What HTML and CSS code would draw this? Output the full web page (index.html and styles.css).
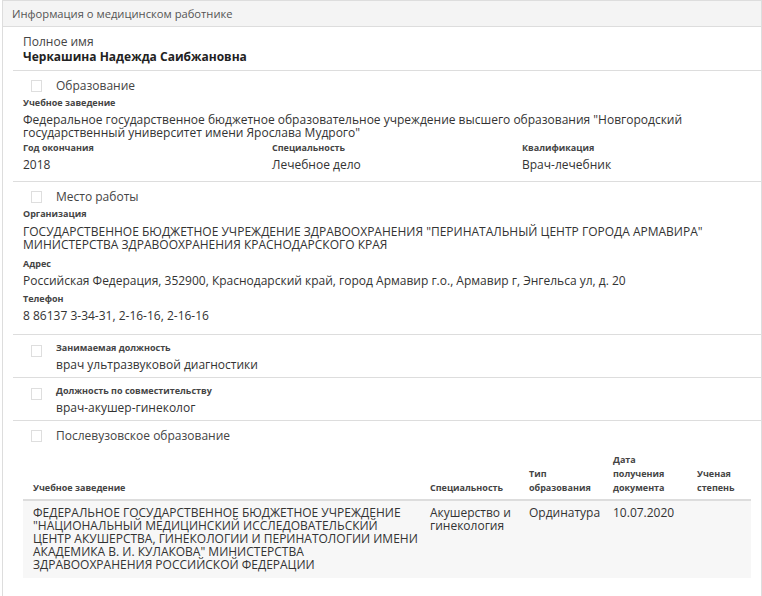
FILE: index.html
```html
<!DOCTYPE html>
<html lang="ru">

<head>
    <meta charset="UTF-8">
    <meta name="viewport" content="width=device-width, initial-scale=1.0">
    <title>Информация о медицинском работнике</title>
    <link rel="stylesheet" href="styles.css">
</head>

<body>

    <article class="panel">
        <header class="panel-heading">Информация о медицинском работнике</header>

        <div class="panel-body">

            <section class="block name-block">
                <p class="name-label">Полное имя</p>
                <p class="name-value">Черкашина Надежда Саибжановна</p>
            </section>

            <section class="block edu-block">
                <div class="check-row">
                    <span class="check"></span>
                    <span>Образование</span>
                </div>
                <div class="field">
                    <p class="label">Учебное заведение</p>
                    <p class="value">Федеральное государственное бюджетное образовательное учреждение высшего образования "Новгородский государственный университет имени Ярослава Мудрого"</p>
                </div>
                <div class="cols">
                    <div>
                        <p class="label">Год окончания</p>
                        <p class="value">2018</p>
                    </div>
                    <div>
                        <p class="label">Специальность</p>
                        <p class="value">Лечебное дело</p>
                    </div>
                    <div>
                        <p class="label">Квалификация</p>
                        <p class="value">Врач-лечебник</p>
                    </div>
                </div>
            </section>

            <section class="block work-block">
                <div class="check-row">
                    <span class="check"></span>
                    <span>Место работы</span>
                </div>
                <div class="field org">
                    <p class="label">Организация</p>
                    <p class="value">ГОСУДАРСТВЕННОЕ БЮДЖЕТНОЕ УЧРЕЖДЕНИЕ ЗДРАВООХРАНЕНИЯ "ПЕРИНАТАЛЬНЫЙ ЦЕНТР ГОРОДА АРМАВИРА" МИНИСТЕРСТВА ЗДРАВООХРАНЕНИЯ КРАСНОДАРСКОГО КРАЯ</p>
                </div>
                <div class="field spaced">
                    <p class="label">Адрес</p>
                    <p class="value">Российская Федерация, 352900, Краснодарский край, город Армавир г.о., Армавир г, Энгельса ул, д. 20</p>
                </div>
                <div class="field spaced">
                    <p class="label">Телефон</p>
                    <p class="value">8 86137 3-34-31, 2-16-16, 2-16-16</p>
                </div>
            </section>

            <section class="block post-block">
                <span class="check"></span>
                <div>
                    <p class="label">Занимаемая должность</p>
                    <p class="value">врач ультразвуковой диагностики</p>
                </div>
            </section>

            <section class="block post-block">
                <span class="check"></span>
                <div>
                    <p class="label">Должность по совместительству</p>
                    <p class="value">врач-акушер-гинеколог</p>
                </div>
            </section>

            <section class="block last-block">
                <div class="check-row">
                    <span class="check"></span>
                    <span>Послевузовское образование</span>
                </div>

                <table class="grid">
                    <thead>
                        <tr>
                            <th class="c1">Учебное заведение</th>
                            <th class="c2">Специальность</th>
                            <th class="c3">Тип образования</th>
                            <th class="c4">Дата получения документа</th>
                            <th class="c5">Ученая степень</th>
                        </tr>
                    </thead>
                    <tbody>
                        <tr>
                            <td>ФЕДЕРАЛЬНОЕ ГОСУДАРСТВЕННОЕ БЮДЖЕТНОЕ УЧРЕЖДЕНИЕ "НАЦИОНАЛЬНЫЙ МЕДИЦИНСКИЙ ИССЛЕДОВАТЕЛЬСКИЙ ЦЕНТР АКУШЕРСТВА, ГИНЕКОЛОГИИ И ПЕРИНАТОЛОГИИ ИМЕНИ АКАДЕМИКА В. И. КУЛАКОВА" МИНИСТЕРСТВА ЗДРАВООХРАНЕНИЯ РОССИЙСКОЙ ФЕДЕРАЦИИ</td>
                            <td>Акушерство и гинекология</td>
                            <td>Ординатура</td>
                            <td>10.07.2020</td>
                            <td></td>
                        </tr>
                    </tbody>
                </table>
            </section>

        </div>
    </article>

</body>

</html>
```

FILE: styles.css
```css
body {
    font-family: "Open Sans", "Liberation Sans", sans-serif;
    margin: 0;
    color: #333;
    background-color: white;
}

p {
    margin: 0;
}

.panel {
    margin-left: 2px;
    width: 758px;
    border: 1px solid #ddd;
    border-bottom: none;
    min-height: 595px;
}

.panel-heading {
    height: 25px;
    line-height: 25px;
    padding-left: 9px;
    font-size: 11.2px;
    color: #555;
    background-color: #f4f4f4;
    border-bottom: 1px solid #ddd;
}

.panel-body {
    padding-left: 10px;
}

.block {
    padding: 6px 0 6px 10px;
    border-bottom: 1px solid #ddd;
}

.name-block {
    padding-top: 7px;
    padding-bottom: 5px;
}

.name-label {
    font-size: 12px;
    line-height: 15px;
    color: #444;
}

.name-value {
    font-size: 12px;
    line-height: 16px;
    font-weight: bold;
    color: #222;
}

.check {
    display: inline-block;
    width: 9px;
    height: 10px;
    border: 1px solid #dedede;
    background-color: white;
}

.check-row {
    display: flex;
    align-items: center;
    height: 17px;
    font-size: 12px;
    color: #444;
}

.check-row .check {
    margin: 0 14px 0 8px;
}

.label {
    font-size: 9px;
    line-height: 14px;
    font-weight: bold;
    color: #444;
}

.value {
    margin-top: 3px;
    font-size: 12px;
    line-height: 13px;
    color: #333;
}

.field {
    margin-top: 2px;
}

.field.org .value {
    margin-top: 4px;
}

.field.spaced {
    margin-top: 6px;
}

.field.spaced + .field.spaced {
    margin-top: 5px;
}

.cols {
    display: grid;
    grid-template-columns: 249px 250px 1fr;
    margin-top: 2px;
}

.edu-block {
    padding-bottom: 10px;
}

.work-block {
    padding-bottom: 12px;
}

.post-block {
    display: flex;
    align-items: flex-start;
}

.post-block .check {
    margin: 4px 14px 0 8px;
    flex-shrink: 0;
}

.post-block .value {
    margin-top: 3px;
}

.last-block {
    border-bottom: none;
    padding-right: 9px;
}

.grid {
    width: 728px;
    margin-top: 4px;
    border-collapse: collapse;
    table-layout: fixed;
}

.grid th,
.grid td {
    box-sizing: border-box;
}

.grid th {
    vertical-align: bottom;
    text-align: left;
    padding: 5px 6px 4px 10px;
    font-size: 9px;
    line-height: 14px;
    font-weight: bold;
    color: #444;
    border-bottom: 2px solid #ddd;
}

.grid .c1 { width: 397px; padding-right: 2px; }
.grid .c2 { width: 99px; }
.grid .c3 { width: 84px; }
.grid .c4 { width: 84px; }

.grid td {
    vertical-align: top;
    padding: 5px 2px 7px 10px;
    font-size: 12px;
    line-height: 13px;
    color: #333;
    background-color: #f7f7f7;
}

.grid td:first-child {
    padding-right: 2px;
}
```
